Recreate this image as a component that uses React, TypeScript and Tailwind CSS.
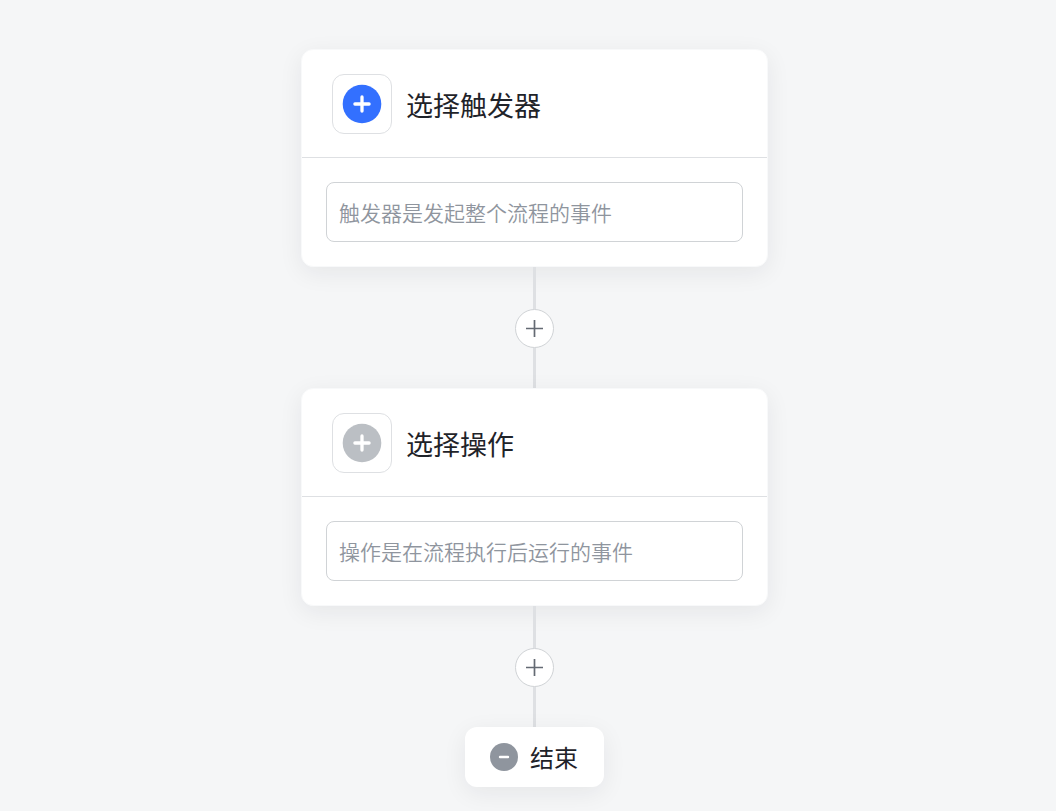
type Tone = "primary" | "muted";

const toneClass: Record<Tone, string> = {
  primary: "text-[#3370ff]",
  muted: "text-[#bbbfc4]",
};

const PlusBadge = ({ tone }: { tone: Tone }) => (
  <div className="flex h-[60px] w-[60px] shrink-0 items-center justify-center rounded-xl border border-[#dee0e3]">
    <svg viewBox="0 0 40 40" className={`h-10 w-10 ${toneClass[tone]}`} aria-hidden="true">
      <circle cx="20" cy="20" r="19.3" fill="currentColor" />
      <path d="M20 12.9v14.2M12.9 20h14.2" stroke="#fff" strokeWidth="3.3" strokeLinecap="round" />
    </svg>
  </div>
);

interface StepCardProps {
  id: string;
  title: string;
  placeholder: string;
  tone: Tone;
}

const StepCard = ({ id, title, placeholder, tone }: StepCardProps) => (
  <section className="w-full max-w-[467px] rounded-xl border border-[#f8f9fa] bg-white shadow-[0_6px_24px_rgba(31,35,41,0.07)]">
    <div className="flex items-center gap-[14px] border-b border-[#dee0e3] pt-6 pr-6 pb-[23px] pl-[30px]">
      <PlusBadge tone={tone} />
      <label htmlFor={id} className="pt-0.5 text-[27px] leading-10 text-[#1f2329]">
        {title}
      </label>
    </div>
    <div className="p-6">
      <input
        id={id}
        type="text"
        readOnly
        placeholder={placeholder}
        className="block h-[60px] w-full rounded-lg border border-[#d0d3d6] bg-white px-3 text-[21px] font-[350] placeholder:text-[#8f959e] placeholder:opacity-100 focus:outline-none"
      />
    </div>
  </section>
);

const Connector = () => (
  <div className="flex flex-col items-center">
    <div className="h-[42px] w-[3px] bg-[#dee0e3]" />
    <button
      type="button"
      aria-label="添加步骤"
      className="flex h-[39px] w-[39px] items-center justify-center rounded-full border border-[#d0d3d6] bg-white text-[#646a73]"
    >
      <svg viewBox="0 0 19 19" className="h-[19px] w-[19px]" aria-hidden="true">
        <path d="M9.5 1v17M1 9.5h17" stroke="currentColor" strokeWidth="1.7" />
      </svg>
    </button>
    <div className="h-10 w-[3px] bg-[#dee0e3]" />
  </div>
);

const EndNode = () => (
  <div className="flex h-[60px] items-center gap-3 rounded-xl bg-white pr-[26px] pl-[25px] text-2xl text-[#1f2329] shadow-[0_6px_24px_rgba(31,35,41,0.07)]">
    <svg viewBox="0 0 28 28" className="h-7 w-7" aria-hidden="true">
      <circle cx="14" cy="14" r="14" fill="#8f959e" />
      <path d="M10 14h8" stroke="#fff" strokeWidth="2.4" strokeLinecap="round" />
    </svg>
    <span>结束</span>
  </div>
);

const App = () => (
  <main className="flex min-h-screen flex-col items-center bg-[#f5f6f7] pt-[49px] pb-6 pl-[13px] font-['Noto_Sans_CJK_SC',sans-serif]">
    <StepCard id="trigger" title="选择触发器" placeholder="触发器是发起整个流程的事件" tone="primary" />
    <Connector />
    <StepCard id="action" title="选择操作" placeholder="操作是在流程执行后运行的事件" tone="muted" />
    <Connector />
    <EndNode />
  </main>
);

export default App;
